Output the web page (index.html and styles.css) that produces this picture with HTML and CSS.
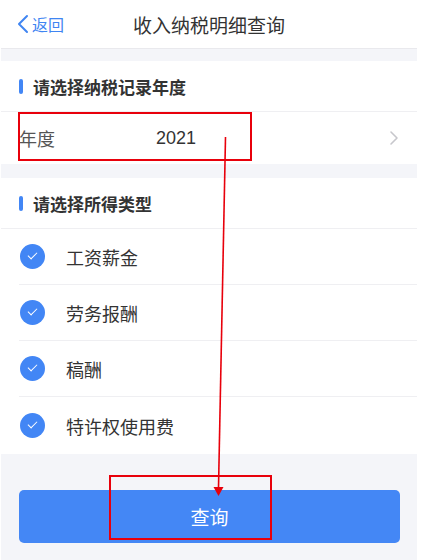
FILE: index.html
```html
<!DOCTYPE html>
<html lang="zh-CN">
<head>
    <meta charset="UTF-8">
    <meta name="viewport" content="width=device-width, initial-scale=1.0">
    <title>收入纳税明细查询</title>
    <link rel="stylesheet" href="styles.css">
</head>
<body>

<div class="pagina">
    <div class="cabecera">
        <a class="volver" href="#">
            <svg width="12" height="20" viewBox="0 0 12 20"><path d="M10 2 L2 10 L10 18" fill="none" stroke="#3f85f2" stroke-width="2" stroke-linecap="round" stroke-linejoin="round"/></svg>
            <span>返回</span>
        </a>
        <h1>收入纳税明细查询</h1>
    </div>

    <div class="separador"></div>

    <div class="titulo-seccion"><i></i>请选择纳税记录年度</div>
    <div class="fila-anio">
        <span class="etiqueta">年度</span>
        <span class="valor">2021</span>
        <svg class="flecha" width="10" height="16" viewBox="0 0 10 16"><path d="M2 2 L8 8 L2 14" fill="none" stroke="#c7c7cc" stroke-width="1.6" stroke-linecap="round" stroke-linejoin="round"/></svg>
    </div>

    <div class="separador"></div>

    <div class="titulo-seccion"><i></i>请选择所得类型</div>
    <ul class="tipos">
        <li><span class="check"></span>工资薪金</li>
        <li><span class="check"></span>劳务报酬</li>
        <li><span class="check"></span>稿酬</li>
        <li><span class="check"></span>特许权使用费</li>
    </ul>

    <div class="pie">
        <button class="boton-consulta">查询</button>
    </div>
</div>

<!-- anotaciones en rojo -->
<div class="marca marca-anio"></div>
<div class="marca marca-boton"></div>
<svg class="trazo" width="428" height="560" viewBox="0 0 428 560">
    <line x1="225.5" y1="137" x2="218.5" y2="488" stroke="#e8000b" stroke-width="1.6"/>
    <polygon points="213.5,487 223.5,487 218.5,496" fill="#e8000b"/>
</svg>

</body>
</html>
```

FILE: styles.css
```css
body {
    margin: 0;
    background: #fff;
    font-family: "Noto Sans CJK SC", "Noto Sans", sans-serif;
    color: #333;
}
.pagina {
    width: 416px;
    margin-left: 1px;
    height: 560px;
    background: #f4f5f9;
    display: flex;
    flex-direction: column;
}
.cabecera {
    position: relative;
    height: 48px;
    background: #fff;
    border-bottom: 1px solid #e9e9ed;
    display: flex;
    align-items: center;
    justify-content: center;
}
.cabecera h1 {
    margin: 0;
    font-size: 19px;
    font-weight: normal;
    color: #333;
}
.volver {
    position: absolute;
    left: 16px;
    top: 12px;
    display: flex;
    align-items: center;
    gap: 3px;
    color: #3f85f2;
    text-decoration: none;
    font-size: 16px;
}
.separador {
    height: 12px;
}
.titulo-seccion {
    height: 50px;
    background: #fff;
    border-bottom: 1px solid #efeff2;
    display: flex;
    align-items: center;
    padding-left: 18px;
    font-size: 17px;
    font-weight: bold;
    color: #333;
}
.titulo-seccion i {
    width: 4px;
    height: 15px;
    border-radius: 2px;
    background: #4286f5;
    margin-right: 10px;
}
.fila-anio {
    height: 52px;
    background: #fff;
    display: flex;
    align-items: center;
    padding: 0 18px;
    font-size: 18px;
}
.fila-anio .etiqueta {
    color: #555;
    width: 137px;
}
.fila-anio .valor {
    flex: 1;
    color: #333;
    font-family: "Liberation Sans", "Noto Sans CJK SC", sans-serif;
}
.fila-anio + .separador {
    height: 14px;
}
.tipos {
    list-style: none;
    margin: 0;
    padding: 0 0 0 18px;
    background: #fff;
}
.tipos li {
    height: 55px;
    display: flex;
    align-items: center;
    font-size: 18px;
    color: #333;
    border-bottom: 1px solid #efeff2;
}
.tipos li:last-child {
    border-bottom: none;
    height: 57px;
}
.check {
    position: relative;
    width: 25px;
    height: 25px;
    border-radius: 50%;
    background: #4286f5;
    margin: 0 21px 0 1px;
}
.check::after {
    content: "";
    position: absolute;
    left: 8px;
    top: 8px;
    width: 8px;
    height: 4px;
    border-left: 1.2px solid #fff;
    border-bottom: 1.2px solid #fff;
    transform: rotate(-45deg);
}
.pie {
    flex: 1;
    padding: 36px 18px 0;
}
.boton-consulta {
    width: 381px;
    height: 53px;
    border: none;
    border-radius: 5px;
    background: #4487f5;
    color: #fff;
    font-family: inherit;
    font-size: 19px;
}
.marca {
    position: absolute;
    border: 2px solid #e8000b;
}
.marca-anio {
    left: 18px;
    top: 112px;
    width: 230px;
    height: 45px;
}
.marca-boton {
    left: 109px;
    top: 475px;
    width: 159px;
    height: 61px;
}
.trazo {
    position: absolute;
    left: 0;
    top: 0;
    pointer-events: none;
}
```
